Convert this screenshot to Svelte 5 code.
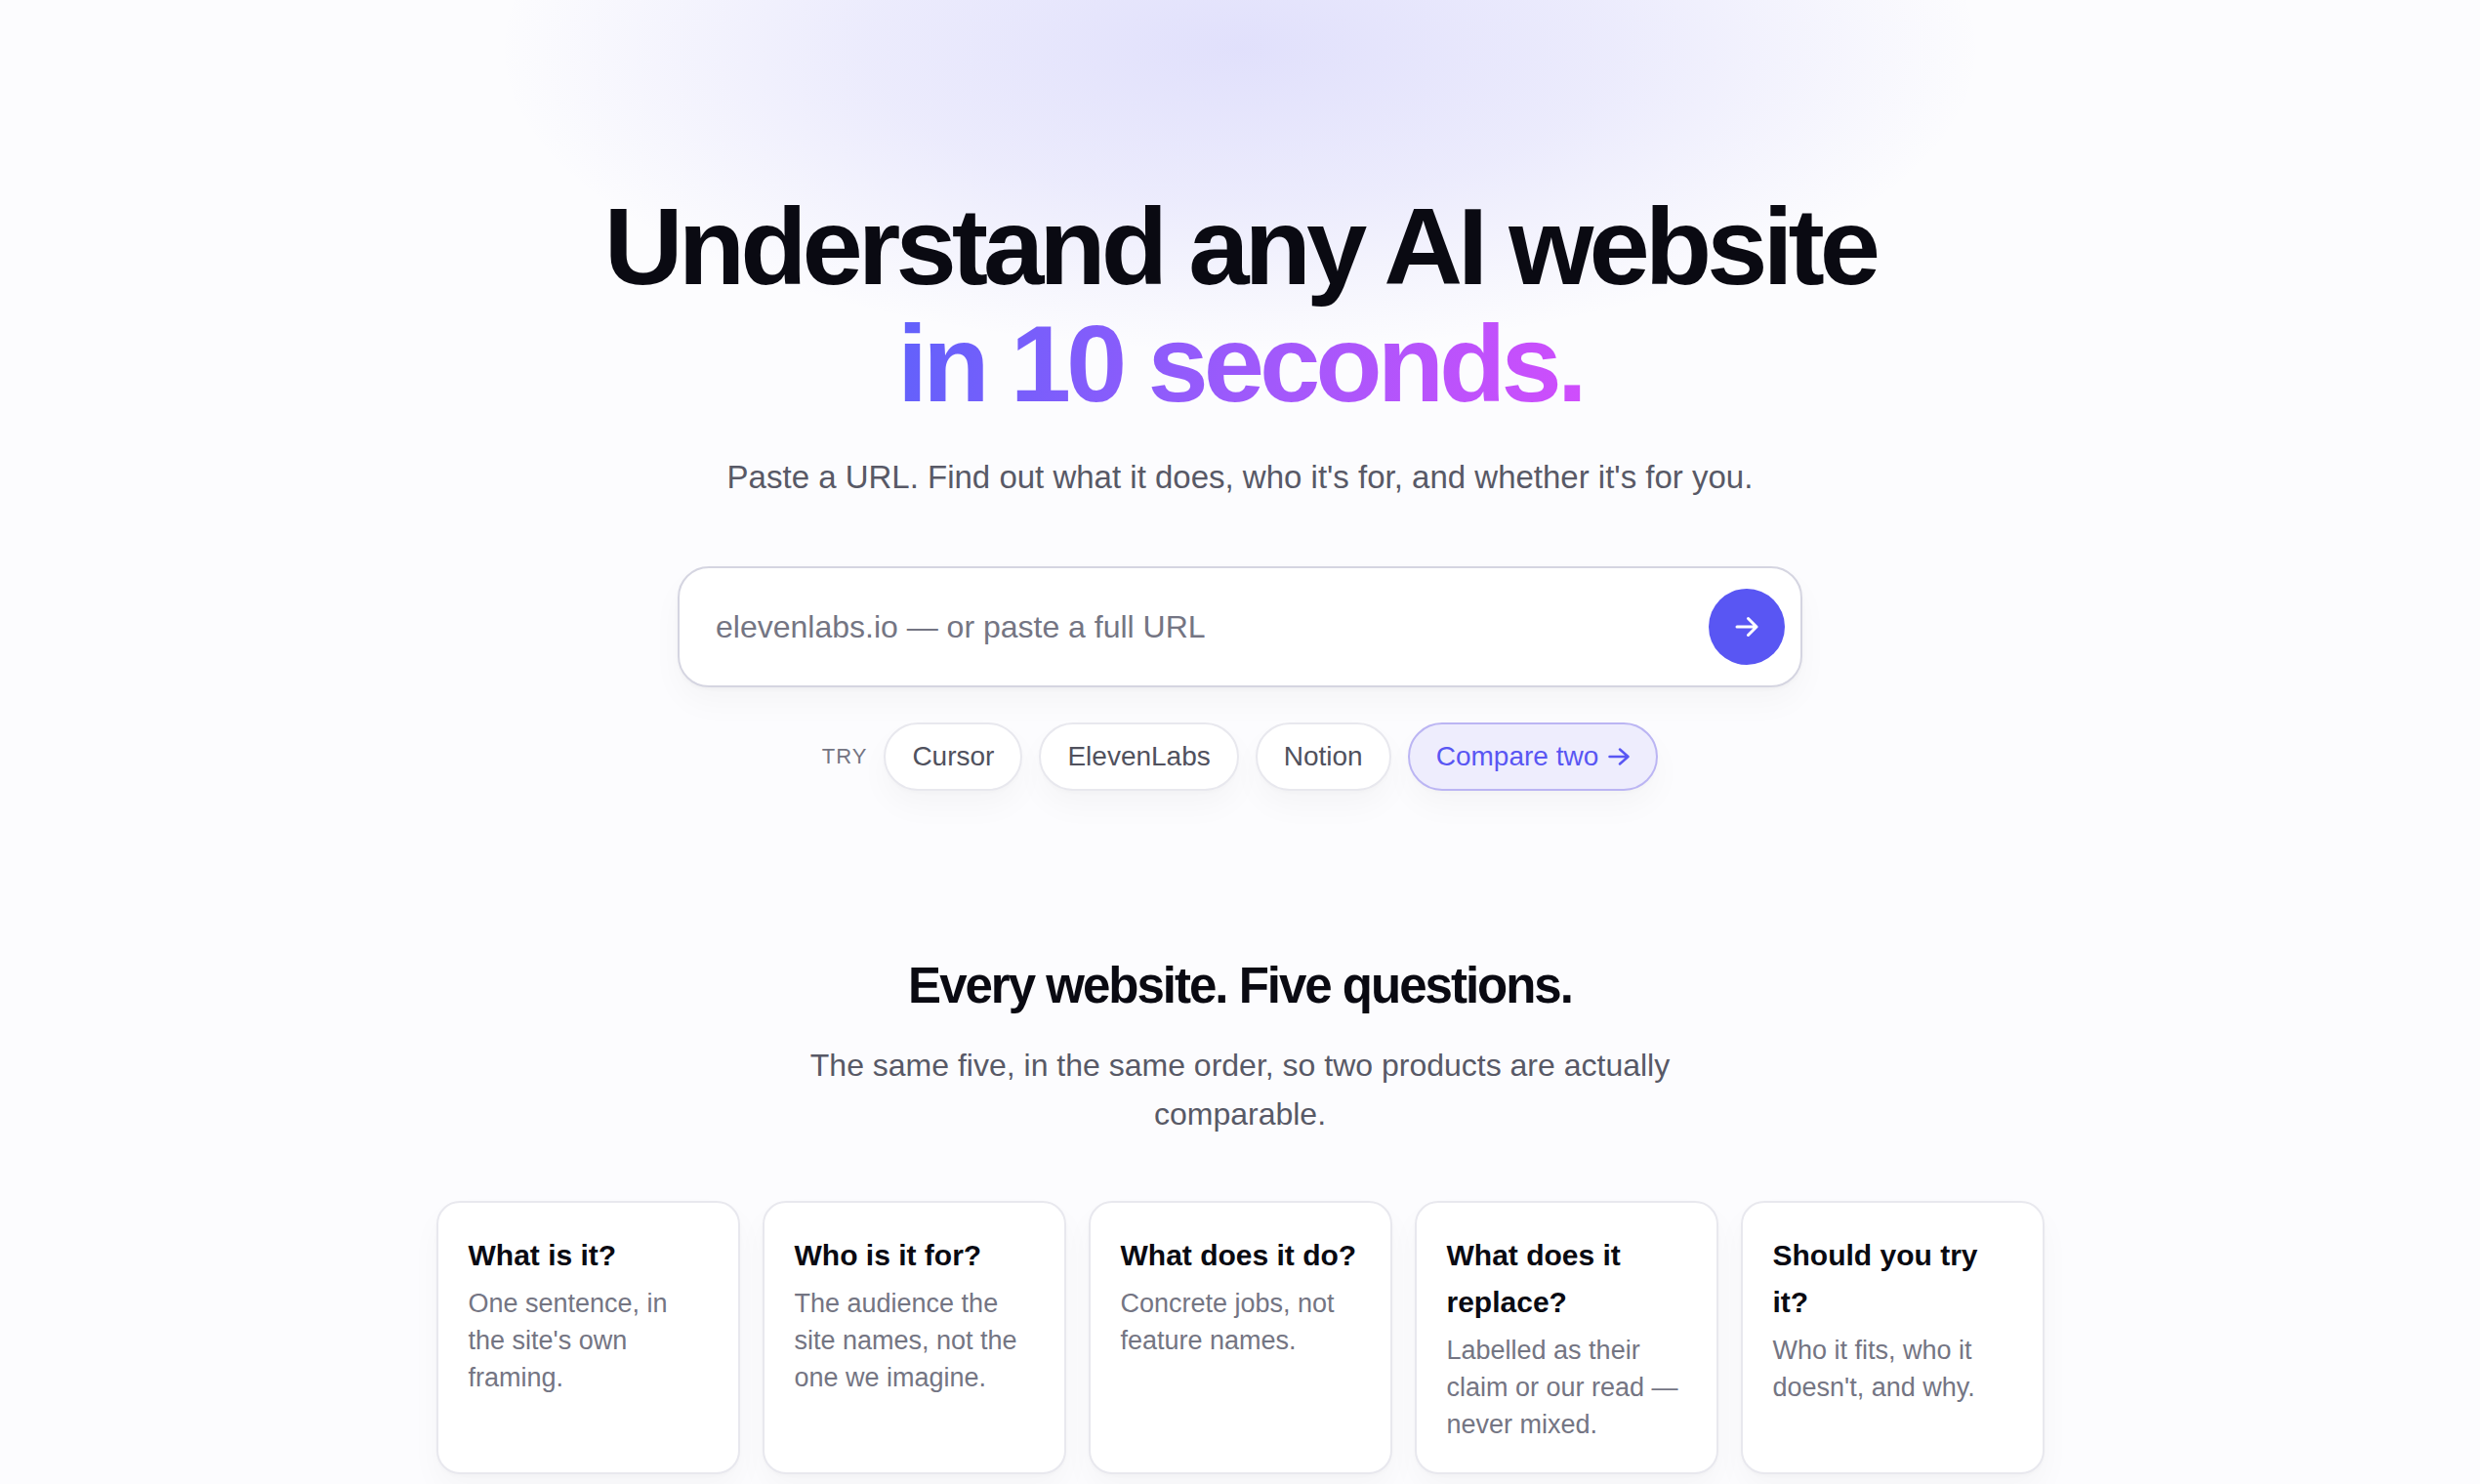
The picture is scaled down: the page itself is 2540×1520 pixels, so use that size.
<script lang="ts">
	let url = $state('');

	const examples = [
		{ name: 'Cursor', url: 'cursor.com' },
		{ name: 'ElevenLabs', url: 'elevenlabs.io' },
		{ name: 'Notion', url: 'notion.so' },
	];

	const questions = [
		{ title: 'What is it?', text: "One sentence, in the site's own framing." },
		{ title: 'Who is it for?', text: 'The audience the site names, not the one we imagine.' },
		{ title: 'What does it do?', text: 'Concrete jobs, not feature names.' },
		{ title: 'What does it replace?', text: 'Labelled as their claim or our read — never mixed.' },
		{ title: 'Should you try it?', text: "Who it fits, who it doesn't, and why." },
	];

	function submit(event: SubmitEvent) {
		event.preventDefault();
	}
</script>

<main>
	<section class="hero">
		<h1>
			Understand any AI website<br />
			<span class="accent">in 10 seconds.</span>
		</h1>
		<p class="lead">
			Paste a URL. Find out what it does, who it's for, and whether it's for you.
		</p>

		<form onsubmit={submit}>
			<input
				type="text"
				aria-label="Website URL"
				placeholder="elevenlabs.io — or paste a full URL"
				bind:value={url}
			/>
			<button class="go" type="submit" aria-label="Explain this website">
				<svg width="24" height="24" viewBox="0 0 24 24" aria-hidden="true">
					<path d="M2 12h20M13.5 3.5 22 12l-8.5 8.5" />
				</svg>
			</button>
		</form>

		<div class="examples">
			<span class="try">TRY</span>
			{#each examples as example}
				<button class="pill" type="button" onclick={() => (url = example.url)}>
					{example.name}
				</button>
			{/each}
			<a class="pill compare" href="#compare">
				Compare two
				<svg width="22" height="18" viewBox="0 0 22 18" aria-hidden="true">
					<path d="M1.5 9h19M12 1.5 20.5 9 12 16.5" />
				</svg>
			</a>
		</div>
	</section>

	<section class="questions">
		<h2>Every website. Five questions.</h2>
		<p class="intro">
			The same five, in the same order, so two products are actually comparable.
		</p>

		<div class="grid">
			{#each questions as question}
				<article>
					<h3>{question.title}</h3>
					<p>{question.text}</p>
				</article>
			{/each}
		</div>
	</section>
</main>

<style>
	:global(body) {
		margin: 0;
		background: #fcfcfe;
	}

	main {
		box-sizing: border-box;
		min-height: 100vh;
		padding: 193px 40px 10px;
		font-family: 'Liberation Sans', Arial, sans-serif;
		color: #0a0a12;
		background: radial-gradient(
				ellipse 760px 310px at 50% 50px,
				rgba(91, 87, 240, 0.17),
				rgba(91, 87, 240, 0.1) 50%,
				rgba(91, 87, 240, 0)
			)
			no-repeat;
	}

	h1,
	h2,
	h3,
	p {
		margin: 0;
	}

	button,
	input {
		font-family: inherit;
	}

	svg {
		fill: none;
		stroke: currentColor;
		stroke-linecap: round;
		stroke-linejoin: round;
	}

	.hero,
	.questions {
		display: flex;
		flex-direction: column;
		align-items: center;
		text-align: center;
	}

	h1 {
		font-size: 112px;
		line-height: 120px;
		font-weight: 700;
		letter-spacing: -5px;
	}

	.accent {
		background: linear-gradient(100deg, #6161fb, #a259fb 55%, #d04dfc);
		-webkit-background-clip: text;
		background-clip: text;
		color: transparent;
	}

	.lead {
		margin-top: 29px;
		font-size: 33px;
		line-height: 54px;
		color: #585966;
	}

	form {
		display: flex;
		align-items: center;
		box-sizing: border-box;
		width: 100%;
		max-width: 1152px;
		margin-top: 64px;
		padding: 21px 16px 21px 37px;
		border: 2px solid #d5d5e1;
		border-radius: 32px;
		background: #fff;
		box-shadow:
			0 2px 4px rgba(10, 10, 30, 0.03),
			0 16px 32px rgba(10, 10, 30, 0.03);
	}

	input {
		flex: 1;
		min-width: 0;
		padding: 0;
		border: 0;
		outline: 0;
		background: transparent;
		font-size: 32px;
		color: #0a0a12;
	}

	input::placeholder {
		color: #747583;
		opacity: 1;
	}

	.go {
		display: grid;
		place-items: center;
		width: 78px;
		height: 78px;
		padding: 0;
		border: 0;
		border-radius: 50%;
		background: #5956f3;
		color: #fff;
		cursor: pointer;
	}

	.go svg {
		stroke-width: 3;
	}

	.examples {
		display: flex;
		flex-wrap: wrap;
		align-items: center;
		justify-content: center;
		gap: 17px;
		margin-top: 36px;
	}

	.try {
		font-size: 22px;
		letter-spacing: 1px;
		color: #747583;
	}

	.pill {
		display: flex;
		align-items: center;
		gap: 10px;
		padding: 0 27px;
		border: 2px solid #e8e8ee;
		border-radius: 35px;
		background: #fff;
		box-shadow:
			0 2px 4px rgba(10, 10, 30, 0.02),
			0 16px 32px rgba(10, 10, 30, 0.03);
		font-size: 28px;
		line-height: 66px;
		color: #50515d;
		text-decoration: none;
		cursor: pointer;
	}

	.compare {
		border-color: #bbb5f3;
		background: #eeedfd;
		color: #5956f3;
	}

	.compare svg {
		stroke-width: 2.5;
	}

	.questions {
		margin-top: 170px;
	}

	h2 {
		font-size: 51px;
		line-height: 60px;
		font-weight: 700;
		letter-spacing: -2px;
	}

	.intro {
		max-width: 900px;
		margin-top: 26px;
		font-size: 32px;
		line-height: 50px;
		color: #585966;
	}

	.grid {
		display: grid;
		grid-template-columns: repeat(5, 1fr);
		gap: 23px;
		width: 100%;
		max-width: 1647px;
		margin-top: 64px;
		text-align: left;
	}

	article {
		padding: 30px 31px;
		border: 2px solid #e8e8ee;
		border-radius: 24px;
		background: #fff;
		box-shadow:
			0 2px 4px rgba(10, 10, 30, 0.02),
			0 16px 32px rgba(10, 10, 30, 0.03);
	}

	h3 {
		font-size: 30px;
		line-height: 48px;
		font-weight: 700;
	}

	article p {
		margin-top: 6px;
		font-size: 27px;
		line-height: 38px;
		color: #747583;
	}
</style>
